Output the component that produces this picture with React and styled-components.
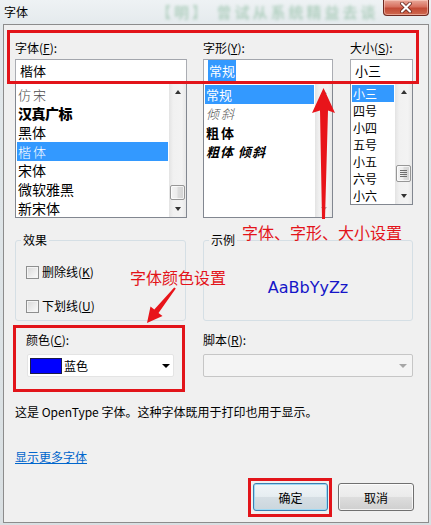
import React from 'react';
import styled, { createGlobalStyle } from 'styled-components';

const FONT = `"Noto Sans CJK SC", "Noto Sans", sans-serif`;

const Global = createGlobalStyle`
  html, body { margin: 0; padding: 0; background: #dfe5e9; }
  body { font-family: ${FONT}; font-size: 12px; color: #000; }
  * { box-sizing: border-box; }
`;

const Window = styled.div`
  position: relative;
  width: 431px;
  height: 525px;
  overflow: hidden;
  display: flex;
  flex-direction: column;
  background: linear-gradient(180deg, #eef2f4 0%, #e2e8eb 30px, #d9dfe2 100%);
`;

const TitleBar = styled.div`
  height: 24px;
  display: flex;
  align-items: flex-start;
  padding-left: 4px;
`;

const Title = styled.div`
  line-height: 24px;
  font-size: 12px;
`;

const GlassText = styled.div`
  margin-left: 128px;
  margin-top: 3px;
  font-size: 15px;
  line-height: 18px;
  letter-spacing: 3px;
  color: #4e9a6a;
  opacity: 0.35;
  filter: blur(1.4px);
  white-space: nowrap;
  font-weight: 700;
`;

const CloseButton = styled.div`
  margin-left: auto;
  margin-right: 2px;
  width: 46px;
  height: 16px;
  border: 1px solid #6e2a22;
  border-top: none;
  border-radius: 0 0 4px 4px;
  background: linear-gradient(180deg, #e9a99b 0%, #d7705f 45%, #c24a36 55%, #cf6a50 100%);
  box-shadow: inset 0 0 0 1px rgba(255, 220, 210, 0.5);
  display: flex;
  align-items: center;
  justify-content: center;
`;

const Panel = styled.div`
  flex: 1;
  margin: 0 2px 2px 3px;
  background: #f0f0f0;
  border: 1px solid #8c8c8c;
  padding: 15px 0 10px 11px;
  display: flex;
  flex-direction: column;
`;

const TopRow = styled.div`
  display: flex;
  align-items: flex-start;
`;

const Column = styled.div`
  width: ${(p) => p.$w}px;
  margin-left: ${(p) => p.$ml || 0}px;
  display: flex;
  flex-direction: column;
`;

const Label = styled.div`
  height: ${(p) => p.$h || 19}px;
  line-height: 16px;
  font-size: 12px;
  white-space: nowrap;
  margin-bottom: ${(p) => p.$mb || 0}px;
`;

const TextBox = styled.div`
  height: 23px;
  border: 1px solid #abadb3;
  border-top-color: #a3a6ad;
  background: #fff;
  padding: 0 4px;
  display: flex;
  align-items: center;
  font-size: 13px;
`;

const Selected = styled.span`
  background: #3399ff;
  color: #fff;
  padding: 1px 1px;
`;

const ListBox = styled.div`
  height: ${(p) => p.$h}px;
  border: 1px solid #828790;
  border-top-color: #9da1a8;
  background: #fff;
  display: flex;
`;

const ListBody = styled.div`
  flex: 1;
  padding: 2px 1px 0 1px;
  overflow: hidden;
`;

const variants = {
  fang: 'color:#4a4a4a; font-weight:300; letter-spacing:2px; font-size:13px;',
  heavy: 'font-weight:900; letter-spacing:-0.5px;',
  italic: 'font-style:italic; color:#555; font-weight:300; letter-spacing:2px;',
  bold: 'font-weight:700; letter-spacing:2px;',
  bolditalic: 'font-weight:700; font-style:italic; letter-spacing:1px;',
  plain: '',
};

const Item = styled.div`
  height: ${(p) => p.$h || 19}px;
  line-height: ${(p) => p.$h || 19}px;
  padding-left: 1px;
  font-size: ${(p) => p.$fs || 14}px;
  white-space: nowrap;
  background: ${(p) => (p.$sel ? '#3399ff' : 'transparent')};
  color: ${(p) => (p.$sel ? '#fff' : '#000')};
  ${(p) => variants[p.$v || 'plain']}
  ${(p) => (p.$sel ? 'color:#fff;' : '')}
`;

const ScrollBar = styled.div`
  width: 17px;
  display: flex;
  flex-direction: column;
  background: linear-gradient(90deg, #e3e3e3 0%, #f1f1f1 25%, #f3f3f3 75%, #e8e8e8 100%);
`;

const ScrollBtn = styled.div`
  height: 17px;
  display: flex;
  align-items: center;
  justify-content: center;
  margin-top: ${(p) => (p.$bottom ? 'auto' : '0')};
`;

const Tri = styled.div`
  width: 0;
  height: 0;
  border-left: 3.5px solid transparent;
  border-right: 3.5px solid transparent;
  ${(p) =>
    p.$up
      ? `border-bottom: 4px solid ${p.$c || '#333'};`
      : `border-top: 4px solid ${p.$c || '#333'};`}
`;

const Thumb = styled.div`
  margin-top: ${(p) => p.$top}px;
  margin-left: 1px;
  width: 15px;
  height: ${(p) => p.$h}px;
  border: 1px solid #979797;
  border-radius: 2px;
  background: linear-gradient(90deg, #f4f4f4 0%, #ececec 45%, #dcdcdc 55%, #d2d2d2 100%);
  box-shadow: inset 0 0 0 1px rgba(255, 255, 255, 0.7);
  display: flex;
  flex-direction: column;
  align-items: center;
  justify-content: center;
  gap: 1px;
`;

const Grip = styled.div`
  width: 7px;
  height: 1px;
  background: #6e6e6e;
`;

const GroupRow = styled.div`
  display: flex;
  margin-top: 14px;
  gap: 17px;
`;

const Group = styled.fieldset`
  margin: 0;
  width: ${(p) => p.$w}px;
  height: 89px;
  border: 1px solid #d5dfe5;
  border-radius: 3px;
  padding: ${(p) => p.$pt}px 0 0 10px;
  min-width: 0;
  display: flex;
  flex-direction: column;
  align-items: ${(p) => (p.$center ? 'center' : 'flex-start')};
  gap: 18px;
`;

const Legend = styled.legend`
  margin-left: -5px;
  padding: 0 2px;
  font-size: 12px;
  line-height: 16px;
`;

const CheckRow = styled.label`
  display: flex;
  align-items: center;
  height: 16px;
  gap: 3px;
  font-size: 12px;
  white-space: nowrap;
`;

const CheckText = styled.span`
  line-height: 16px;
`;

const CheckBox = styled.span`
  width: 13px;
  height: 13px;
  border: 1px solid #8e8f8f;
  background: linear-gradient(135deg, #d8d8d8 0%, #eaeaea 50%, #fbfbfb 100%);
  box-shadow: inset 0 0 0 1px #f4f4f4;
`;

const Sample = styled.div`
  margin-left: -10px;
  font-family: "DejaVu Sans", sans-serif;
  font-size: 16px;
  line-height: 20px;
  color: #1515c8;
`;

const ComboRow = styled.div`
  display: flex;
  margin-top: 11px;
`;

const Combo = styled.div`
  height: 23px;
  display: flex;
  align-items: center;
  border: 1px solid ${(p) => (p.$disabled ? '#c6c6c6' : '#e4e4e4')};
  border-radius: 2px;
  background: ${(p) => (p.$disabled ? '#f4f4f4' : '#fff')};
  padding-right: ${(p) => (p.$disabled ? 5 : 3)}px;
  margin-left: ${(p) => p.$ml || 0}px;
`;

const Swatch = styled.span`
  width: 32px;
  height: 16px;
  margin-left: 2px;
  background: #0000ff;
  border: 1px solid #1c1c4a;
`;

const ComboText = styled.span`
  margin-left: 2px;
  font-size: 12px;
`;

const ComboArrow = styled.span`
  margin-left: auto;
  width: 0;
  height: 0;
  border-left: 4px solid transparent;
  border-right: 4px solid transparent;
  border-top: 4px solid ${(p) => p.$c};
`;

const Desc = styled.div`
  margin-top: 27px;
  line-height: 16px;
  font-size: 12px;
  white-space: nowrap;
`;

const Link = styled.a`
  margin-top: 29px;
  line-height: 16px;
  font-size: 12px;
  color: #0066cc;
  text-decoration: underline;
  align-self: flex-start;
  cursor: pointer;
`;

const ButtonRow = styled.div`
  margin-top: 18px;
  display: flex;
  justify-content: flex-end;
  gap: 10px;
  padding-right: 14px;
`;

const Button = styled.button`
  width: ${(p) => p.$w}px;
  height: 28px;
  font-family: ${FONT};
  font-size: 12px;
  color: #000;
  border-radius: 3px;
  border: 1px solid ${(p) => (p.$default ? '#3c7fb1' : '#707070')};
  background: ${(p) =>
    p.$default
      ? 'linear-gradient(180deg, #f0f5f8 0%, #e6edf1 48%, #d5dee4 52%, #cbd6dd 100%)'
      : 'linear-gradient(180deg, #f2f2f2 0%, #ebebeb 48%, #dddddd 52%, #cfcfcf 100%)'};
  box-shadow: inset 0 0 0 1px ${(p) => (p.$default ? '#9fd9f4' : 'rgba(255,255,255,0.75)')};
  padding: 0;
`;

/* ---------- annotations (overlay) ---------- */
const Overlay = styled.div`
  position: absolute;
  inset: 0;
  pointer-events: none;
`;

const RedBox = styled.div`
  position: absolute;
  left: ${(p) => p.$x}px;
  top: ${(p) => p.$y}px;
  width: ${(p) => p.$w}px;
  height: ${(p) => p.$h}px;
  border: 3px solid #e2141a;
`;

const RedNote = styled.div`
  position: absolute;
  left: ${(p) => p.$x}px;
  top: ${(p) => p.$y}px;
  font-size: 16px;
  line-height: 22px;
  color: #e3141a;
  white-space: nowrap;
`;

const ArrowSvg = styled.svg`
  position: absolute;
  left: 0;
  top: 0;
`;

function Scroll({ thumbTop, thumbH, grip, disabled }) {
  const c = disabled ? '#a8a8a8' : '#333';
  return (
    <ScrollBar>
      <ScrollBtn>
        <Tri $up $c={c} />
      </ScrollBtn>
      {!disabled && (
        <Thumb $top={thumbTop} $h={thumbH}>
          {grip && (
            <>
              <Grip />
              <Grip />
              <Grip />
              <Grip />
            </>
          )}
        </Thumb>
      )}
      <ScrollBtn $bottom>
        <Tri $c={c} />
      </ScrollBtn>
    </ScrollBar>
  );
}

const sizes = ['小三', '四号', '小四', '五号', '小五', '六号', '小六'];

export default function App() {
  return (
    <>
      <Global />
      <Window>
        <TitleBar>
          <Title>字体</Title>
          <GlassText>【明】 曾试从系统精益去谈</GlassText>
          <CloseButton>
            <svg width="14" height="11" viewBox="0 0 14 11">
              <path d="M3 1.5 L11 9.5 M11 1.5 L3 9.5" stroke="#5a1c14" strokeWidth="3.6" strokeLinecap="round" />
              <path d="M3 1.5 L11 9.5 M11 1.5 L3 9.5" stroke="#ffffff" strokeWidth="2.2" strokeLinecap="round" />
            </svg>
          </CloseButton>
        </TitleBar>

        <Panel>
          <TopRow>
            <Column $w={172}>
              <Label>
                字体(<u>F</u>):
              </Label>
              <TextBox>楷体</TextBox>
              <ListBox $h={136}>
                <ListBody>
                  <Item $v="fang">仿宋</Item>
                  <Item $v="heavy">汉真广标</Item>
                  <Item>黑体</Item>
                  <Item $sel $v="fang">楷体</Item>
                  <Item>宋体</Item>
                  <Item>微软雅黑</Item>
                  <Item>新宋体</Item>
                </ListBody>
                <Scroll thumbTop={85} thumbH={15} />
              </ListBox>
            </Column>

            <Column $w={130} $ml={16}>
              <Label>
                字形(<u>Y</u>):
              </Label>
              <TextBox>
                <Selected>常规</Selected>
              </TextBox>
              <ListBox $h={136}>
                <ListBody>
                  <Item $sel $fs={13}>常规</Item>
                  <Item $v="italic" $fs={13}>倾斜</Item>
                  <Item $v="bold" $fs={13}>粗体</Item>
                  <Item $v="bolditalic" $fs={13}>粗体 倾斜</Item>
                </ListBody>
                <Scroll disabled />
              </ListBox>
            </Column>

            <Column $w={63} $ml={17}>
              <Label>
                大小(<u>S</u>):
              </Label>
              <TextBox>小三</TextBox>
              <ListBox $h={123}>
                <ListBody>
                  {sizes.map((s, i) => (
                    <Item key={s} $sel={i === 0} $h={17} $fs={12}>
                      {s}
                    </Item>
                  ))}
                </ListBody>
                <Scroll thumbTop={65} thumbH={17} grip />
              </ListBox>
            </Column>
          </TopRow>

          <GroupRow>
            <Group $w={171} $pt={16}>
              <Legend>效果</Legend>
              <CheckRow>
                <CheckBox />
                <CheckText>
                  删除线(<u>K</u>)
                </CheckText>
              </CheckRow>
              <CheckRow>
                <CheckBox />
                <CheckText>
                  下划线(<u>U</u>)
                </CheckText>
              </CheckRow>
            </Group>
            <Group $w={210} $pt={30} $center>
              <Legend>示例</Legend>
              <Sample>AaBbYyZz</Sample>
            </Group>
          </GroupRow>

          <ComboRow>
            <Column $w={148} $ml={11}>
              <Label $h={16} $mb={6}>
                颜色(<u>C</u>):
              </Label>
              <Combo $ml={1}>
                <Swatch />
                <ComboText>蓝色</ComboText>
                <ComboArrow $c="#000" />
              </Combo>
            </Column>
            <Column $w={210} $ml={29}>
              <Label $h={16} $mb={6}>
                脚本(<u>R</u>):
              </Label>
              <Combo $disabled>
                <ComboArrow $c="#a6a6a6" />
              </Combo>
            </Column>
          </ComboRow>

          <Desc>这是 OpenType 字体。这种字体既用于打印也用于显示。</Desc>
          <Link>显示更多字体</Link>

          <ButtonRow>
            <Button $w={75} $default>确定</Button>
            <Button $w={76}>取消</Button>
          </ButtonRow>
        </Panel>

        <Overlay>
          <RedBox $x={7} $y={30} $w={412} $h={54} />
          <RedBox $x={13} $y={325} $w={172} $h={67} />
          <RedBox $x={248} $y={478} $w={84} $h={39} />
          <RedNote $x={242} $y={221}>字体、字形、大小设置</RedNote>
          <RedNote $x={130} $y={266}>字体颜色设置</RedNote>
          <ArrowSvg width="431" height="525" viewBox="0 0 431 525">
            <polygon points="323.5,88 335,113 328,110.5 325,219 322,219 320,110.5 312,113" fill="#e8141a" />
            <polygon
              points="147,323 150.5,306.5 154.3,309.6 174.2,287.4 175.8,288.6 158.5,313 162.5,316"
              fill="#e8141a"
            />
          </ArrowSvg>
        </Overlay>
      </Window>
    </>
  );
}
